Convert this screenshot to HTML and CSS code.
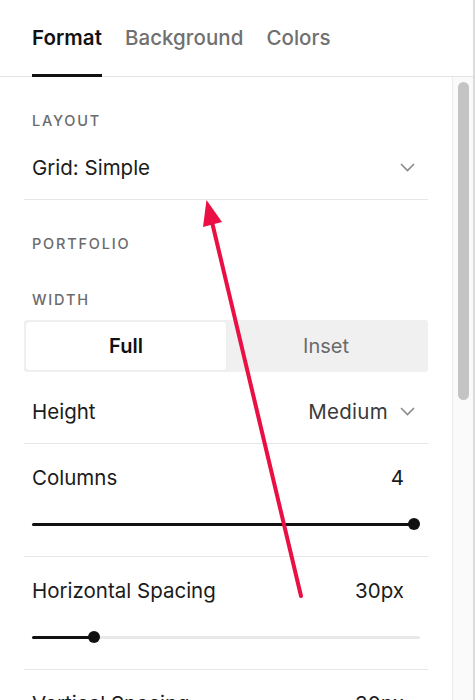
FILE: index.html
```html
<!DOCTYPE html>
<html lang="en">
<head>
<meta charset="utf-8">
<title>Format</title>
<link rel="stylesheet" href="styles.css">
</head>
<body>
<div class="window">
  <div class="tabs">
    <div class="tab active">Format</div>
    <div class="tab">Background</div>
    <div class="tab">Colors</div>
  </div>
  <div class="body">
    <div class="content">
      <div class="label label-first">LAYOUT</div>
      <div class="row select-row">
        <span class="row-title">Grid: Simple</span>
        <svg class="chev" width="15" height="9" viewBox="0 0 15 9"><path d="M1 1l6.5 6.5 6.5-6.5" fill="none" stroke="#8a8a8a" stroke-width="1.6"/></svg>
      </div>
      <div class="label">PORTFOLIO</div>
      <div class="label label-tight">WIDTH</div>
      <div class="segmented">
        <div class="seg seg-on">Full</div>
        <div class="seg">Inset</div>
      </div>
      <div class="row select-row height-row">
        <span class="row-title">Height</span>
        <span class="select-val">Medium
          <svg class="chev" width="15" height="9" viewBox="0 0 15 9"><path d="M1 1l6.5 6.5 6.5-6.5" fill="none" stroke="#8a8a8a" stroke-width="1.6"/></svg>
        </span>
      </div>
      <div class="slider-row">
        <div class="slider-head"><span class="row-title">Columns</span><span class="val">4</span></div>
        <div class="slider"><div class="fill" style="width:calc(6px + 1 * (100% - 12px))"></div><div class="thumb" style="left:calc(6px + 1 * (100% - 12px))"></div></div>
      </div>
      <div class="slider-row">
        <div class="slider-head"><span class="row-title">Horizontal Spacing</span><span class="val">30px</span></div>
        <div class="slider"><div class="fill" style="width:calc(6px + 0.149 * (100% - 12px))"></div><div class="thumb" style="left:calc(6px + 0.149 * (100% - 12px))"></div></div>
      </div>
      <div class="slider-row">
        <div class="slider-head"><span class="row-title">Vertical Spacing</span><span class="val">30px</span></div>
      </div>
    </div>
    <div class="scrollbar"><div class="thumb-bar"></div></div>
  </div>
  <svg class="arrow" width="475" height="700" viewBox="0 0 475 700">
    <line x1="301" y1="596" x2="212" y2="222" stroke="#ea1044" stroke-width="4" stroke-linecap="round"/>
    <polygon points="206.5,200 203,227 222,222" fill="#ea1044"/>
  </svg>
</div>
</body>
</html>
```
FILE: styles.css
```css
html, body {
  margin: 0;
  padding: 0;
  background: #ffffff;
}
body {
  font-family: Inter, "Noto Sans", "Liberation Sans", sans-serif;
  color: #1b1b1b;
  overflow: hidden;
}
.window {
  position: relative;
  width: 473px;
  height: 700px;
  border-right: 2px solid #dcdcdc;
  overflow: hidden;
}
.tabs {
  display: flex;
  gap: 23px;
  height: 76px;
  padding-left: 32px;
  border-bottom: 1px solid #e4e4e4;
  box-sizing: content-box;
}
.tab {
  display: flex;
  align-items: center;
  height: 74px;
  border-bottom: 3px solid transparent;
  margin-bottom: -1px;
  font-size: 20.5px;
  font-weight: 500;
  color: #707070;
  letter-spacing: 0.05px;
}
.tab.active {
  color: #111111;
  border-bottom-color: #111111;
  font-weight: 600;
}
.body {
  display: flex;
  height: 623px;
}
.content {
  flex: 1;
  padding: 0 24px;
  overflow: hidden;
}
.label {
  margin-top: 32px;
  padding-left: 8px;
  height: 24px;
  line-height: 24px;
  font-size: 14.5px;
  font-weight: 500;
  letter-spacing: 1.8px;
  color: #6b6b6b;
}
.label-tight {
  margin-top: 32px;
}
.row {
  display: flex;
  align-items: center;
  justify-content: space-between;
  border-bottom: 1px solid #e6e6e6;
}
.select-row {
  height: 64px;
  padding: 2px 13px 0 8px;
}
.row-title {
  font-size: 20.5px;
  color: #1b1b1b;
}
.chev {
  display: block;
}
.select-val {
  display: flex;
  align-items: center;
  gap: 12px;
  font-size: 20.5px;
  letter-spacing: 0.3px;
  color: #3a3a3a;
}
.segmented {
  display: flex;
  margin-top: 8px;
  height: 52px;
  padding: 2px;
  box-sizing: border-box;
  background: #f0f0f0;
  border-radius: 3px;
}
.seg {
  flex: 1;
  display: flex;
  align-items: center;
  justify-content: center;
  font-size: 20px;
  color: #6a6a6a;
  border-radius: 3px;
}
.seg-on {
  background: #ffffff;
  color: #111111;
  font-weight: 600;
  box-shadow: 0 0 1px rgba(0,0,0,0.08);
}
.height-row {
  height: 63px;
  padding-top: 8px;
}
.slider-row {
  padding: 21px 24px 26px 8px;
  border-bottom: 1px solid #e6e6e6;
}
.slider-head {
  display: flex;
  justify-content: space-between;
  align-items: center;
  height: 24px;
}
.val {
  font-size: 20.5px;
  color: #1b1b1b;
}
.slider {
  position: relative;
  margin-top: 29px;
  margin-right: -16px;
  height: 12px;
}
.slider::before {
  content: "";
  position: absolute;
  left: 0;
  right: 0;
  top: 4.5px;
  height: 3px;
  border-radius: 2px;
  background: #e8e8e8;
}
.slider .fill {
  position: absolute;
  left: 0;
  top: 4.5px;
  height: 3px;
  background: #111111;
  border-radius: 2px;
}
.slider .thumb {
  position: absolute;
  top: 0;
  width: 12px;
  height: 12px;
  margin-left: -6px;
  border-radius: 50%;
  background: #111111;
}
.scrollbar {
  width: 21px;
  border-left: 1px solid #ebebeb;
  background: #fafafa;
  padding-top: 5px;
  box-sizing: border-box;
}
.thumb-bar {
  margin-left: 5px;
  width: 11px;
  height: 318px;
  border-radius: 6px;
  background: #c4c4c4;
}
.arrow {
  position: absolute;
  left: 0;
  top: 0;
  pointer-events: none;
}
```
